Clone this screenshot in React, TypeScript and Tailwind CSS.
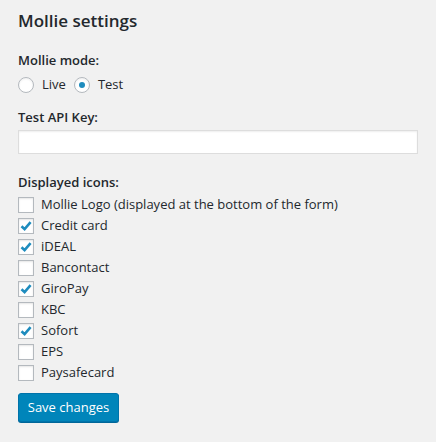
import { useState } from "react";

const methods = [
  { id: "mollie", label: "Mollie Logo (displayed at the bottom of the form)", on: false },
  { id: "creditcard", label: "Credit card", on: true },
  { id: "ideal", label: "iDEAL", on: true },
  { id: "bancontact", label: "Bancontact", on: false },
  { id: "giropay", label: "GiroPay", on: true },
  { id: "kbc", label: "KBC", on: false },
  { id: "sofort", label: "Sofort", on: true },
  { id: "eps", label: "EPS", on: false },
  { id: "paysafecard", label: "Paysafecard", on: false },
];

const Radio = ({ checked, label, onClick }: { checked: boolean; label: string; onClick: () => void }) => (
  <label className="flex items-center gap-2 cursor-pointer" onClick={onClick}>
    <span className="w-4 h-4 rounded-full border border-[#b4b9be] bg-white shadow-[inset_0_1px_2px_rgba(0,0,0,0.07)] flex items-center justify-center">
      {checked && <span className="w-[6px] h-[6px] rounded-full bg-[#1e8cbe]" />}
    </span>
    <span>{label}</span>
  </label>
);

const Checkbox = ({ checked }: { checked: boolean }) => (
  <span className="w-4 h-4 border border-[#b4b9be] bg-white shadow-[inset_0_1px_2px_rgba(0,0,0,0.1)] flex items-center justify-center shrink-0">
    {checked && (
      <svg width="14" height="14" viewBox="0 0 14 14">
        <path d="M2.5 7.2 L5.6 10.2 L11.6 3.2" fill="none" stroke="#1e8cbe" strokeWidth="2.6" />
      </svg>
    )}
  </span>
);

export default function App() {
  const [mode, setMode] = useState<"live" | "test">("test");
  const [icons, setIcons] = useState<Record<string, boolean>>(
    Object.fromEntries(methods.map((m) => [m.id, m.on]))
  );

  return (
    <div
      className="min-h-[442px] bg-[#f1f1f1] text-[#23282d] text-[13px] px-[18px] pt-[11px]"
      style={{ fontFamily: '"Open Sans", "Noto Sans", sans-serif' }}
    >
      <h2 className="text-[17px] leading-[20px] font-semibold">Mollie settings</h2>

      {/* Mode */}
      <div className="mt-[19px] leading-[20px] font-semibold">Mollie mode:</div>
      <div className="mt-[5px] h-5 flex items-center gap-[8px]">
        <Radio checked={mode === "live"} label="Live" onClick={() => setMode("live")} />
        <Radio checked={mode === "test"} label="Test" onClick={() => setMode("test")} />
      </div>

      {/* API key */}
      <div className="mt-[12px] leading-[20px] font-semibold">Test API Key:</div>
      <input
        type="text"
        className="mt-[3px] block w-[400px] h-6 bg-white border border-[#ddd] shadow-[inset_0_1px_2px_rgba(0,0,0,0.07)] outline-none px-2"
      />

      {/* Icons */}
      <div className="mt-[18px] leading-[20px] font-semibold">Displayed icons:</div>
      <div className="mt-[2px] flex flex-col">
        {methods.map((m) => (
          <label
            key={m.id}
            className="h-[21px] flex items-center gap-[7px] cursor-pointer"
            onClick={() => setIcons({ ...icons, [m.id]: !icons[m.id] })}
          >
            <Checkbox checked={icons[m.id]} />
            <span>{m.label}</span>
          </label>
        ))}
      </div>

      <button className="mt-[10px] h-[29px] w-[101px] rounded-[3px] bg-[#0085ba] border border-[#0073aa] shadow-[0_1px_0_#006799] text-white text-[13px]">
        Save changes
      </button>
    </div>
  );
}
